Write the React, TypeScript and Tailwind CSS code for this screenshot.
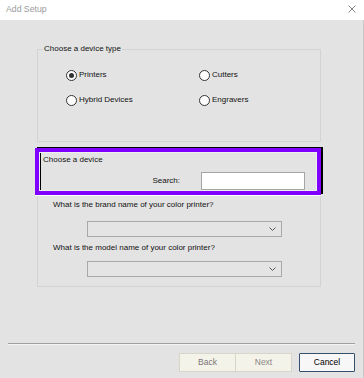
import { useState } from 'react';

const font = "font-['Liberation_Sans',Arial,sans-serif]";

function Radio({ label, checked, onSelect }: { label: string; checked: boolean; onSelect: () => void }) {
  return (
    <label className="flex items-center gap-[2px] cursor-default" onClick={onSelect}>
      <span className="flex items-center justify-center w-[11px] h-[11px] rounded-full border border-[#333333] bg-white">
        {checked && <span className="w-[5px] h-[5px] rounded-full bg-[#333333]" />}
      </span>
      <span className="leading-[12px]">{label}</span>
    </label>
  );
}

function Dropdown() {
  return (
    <div className="ml-[49px] w-[195px] h-[16px] border border-[#a9a9a9] bg-[#e4e4e4] flex items-center justify-end pr-[5px]">
      <svg width="7" height="4" viewBox="0 0 7 4">
        <polyline points="0.5,0.5 3.5,3.5 6.5,0.5" fill="none" stroke="#555" strokeWidth="1" />
      </svg>
    </div>
  );
}

export default function App() {
  const [type, setType] = useState('printers');
  const types = [
    { id: 'printers', label: 'Printers' },
    { id: 'cutters', label: 'Cutters' },
    { id: 'hybrid', label: 'Hybrid Devices' },
    { id: 'engravers', label: 'Engravers' },
  ];

  return (
    <div className={`w-[364px] h-[378px] flex flex-col bg-[#e3e3e3] text-[8px] text-[#111] ${font}`}>
      <div className="h-[20px] bg-white flex items-center justify-between pl-[6px] pr-[8px] shrink-0">
        <span className="text-[8.7px] text-[#9a9a9a]">Add Setup</span>
        <svg width="8" height="8" viewBox="0 0 8 8" className="-mt-[2px]">
          <path d="M0.5 0.5 L7.5 7.5 M7.5 0.5 L0.5 7.5" stroke="#777" strokeWidth="0.9" />
        </svg>
      </div>

      <div className="flex-1 flex flex-col border-r border-[#c9c9c9]">
        <div className="pl-[37px]">
          <fieldset className="mt-[24px] w-[284px] border border-[#d3d3d3] pl-[28px] pt-[15px] pb-[35px]">
            <legend className="ml-[-23px] px-[1px] leading-[10px]">Choose a device type</legend>
            <div className="grid grid-cols-[133px_1fr] gap-y-[13px]">
              {types.map((t) => (
                <Radio key={t.id} label={t.label} checked={type === t.id} onSelect={() => setType(t.id)} />
              ))}
            </div>
          </fieldset>

          <div className="mt-[7px] w-[284px] border border-[#d3d3d3] pb-[9px]">
            <div className="-mt-[2px] -ml-[3px] -mr-[1px] border-4 border-[#8000ff] shadow-[2px_-1px_0_0_#000,0_1px_0_0_#fff,inset_2px_-1px_0_0_#000]">
              <div className="border border-[#efefef] pl-[3px] pt-[1px]">
                <div className="leading-[11px]">Choose a device</div>
                <div className="mt-[7px] flex items-center">
                  <span className="w-[137px] text-right">Search:</span>
                  <input className="ml-[21px] w-[104px] h-[18px] border border-[#a5a5a5] bg-white outline-none px-[2px]" />
                </div>
              </div>
            </div>

            <div className="pl-[15px] mt-[4px] leading-[11px]">What is the brand name of your color printer?</div>
            <div className="mt-[11px]">
              <Dropdown />
            </div>
            <div className="pl-[15px] mt-[5px] leading-[11px]">What is the model name of your color printer?</div>
            <div className="mt-[8px]">
              <Dropdown />
            </div>
          </div>
        </div>

        <div className="flex-1" />

        <div className="mx-[8px] border-t border-[#a0a0a0] shadow-[0_1px_0_0_#f4f4f4]" />

        <div className="flex justify-end pr-[8px] pt-[9px] pb-[6px]">
          <button className="w-[57px] h-[19px] border border-[#d8d6c8] bg-[#f4f3ea] text-[#7a7474] text-[8.5px]">Back</button>
          <button className="-ml-px w-[57px] h-[19px] border border-[#d8d6c8] bg-[#f4f3ea] text-[#8a8585] text-[8.5px]">Next</button>
          <button className="ml-[7px] w-[56px] h-[19px] border border-[#34506f] rounded-[1px] bg-[#f7f7f7] text-black text-[8.5px]">Cancel</button>
        </div>
      </div>
    </div>
  );
}
